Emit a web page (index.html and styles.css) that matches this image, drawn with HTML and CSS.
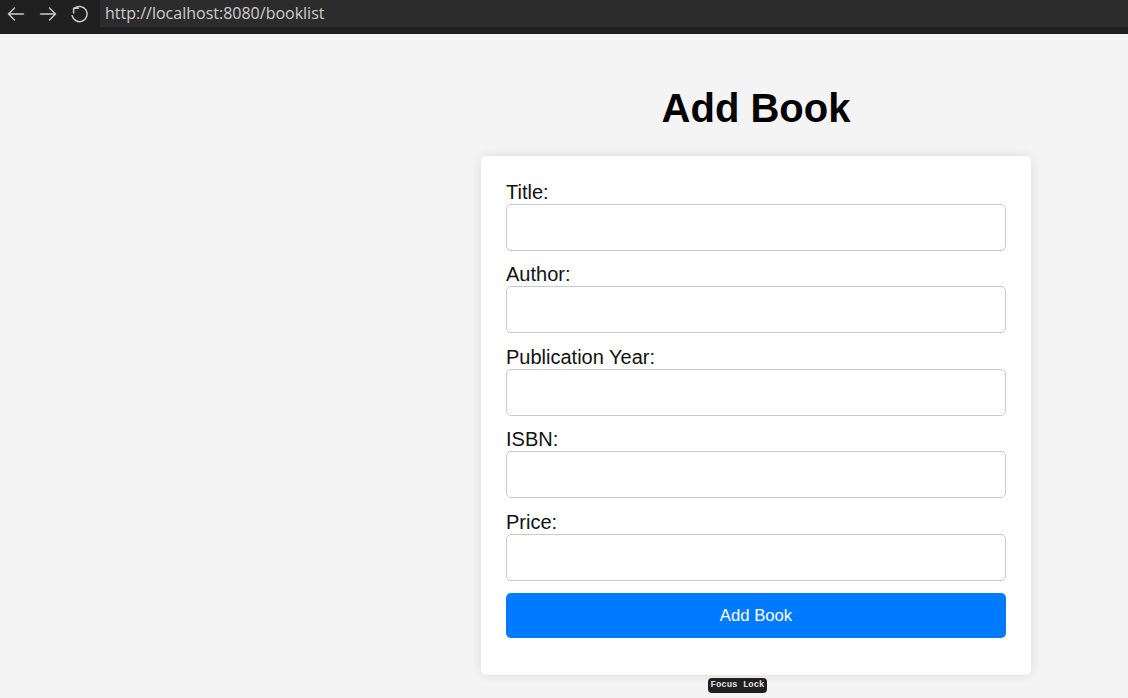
FILE: index.html
```html
<!DOCTYPE html>
<html lang="en">
<head>
<meta charset="utf-8">
<title>Add Book</title>
<link rel="stylesheet" href="styles.css">
</head>
<body>
<header class="browser-bar">
  <nav class="nav-buttons">
    <span class="nav-icon">
      <svg width="18" height="16" viewBox="0 0 18 16" fill="none" stroke="#c9c9c9" stroke-width="1.4" stroke-linecap="round" stroke-linejoin="round"><path d="M16.5 8H1.5M7.5 2L1.5 8l6 6"/></svg>
    </span>
    <span class="nav-icon">
      <svg width="18" height="16" viewBox="0 0 18 16" fill="none" stroke="#c9c9c9" stroke-width="1.4" stroke-linecap="round" stroke-linejoin="round"><path d="M1.5 8h15M10.5 2l6 6-6 6"/></svg>
    </span>
    <span class="nav-icon reload">
      <svg width="18" height="20" viewBox="0 0 18 20" fill="none" stroke="#c9c9c9" stroke-width="1.5" stroke-linecap="round" stroke-linejoin="round"><path d="M3.4 4.4A7.6 7.6 0 1 1 1.1 11.7"/><path d="M7.4 4.2H2.6V9"/></svg>
    </span>
  </nav>
  <div class="url-box">http://localhost:8080/booklist</div>
</header>

<main class="page">
  <section class="content">
    <h1 class="title">Add Book</h1>
    <form class="card">
      <label class="field-label" for="title">Title:</label>
      <input class="field-input" id="title" type="text">
      <label class="field-label" for="author">Author:</label>
      <input class="field-input" id="author" type="text">
      <label class="field-label" for="year">Publication Year:</label>
      <input class="field-input" id="year" type="text">
      <label class="field-label" for="isbn">ISBN:</label>
      <input class="field-input" id="isbn" type="text">
      <label class="field-label" for="price">Price:</label>
      <input class="field-input" id="price" type="text">
      <button class="submit-btn" type="button">Add Book</button>
    </form>
  </section>
</main>

<div class="focus-badge">Focus Lock</div>
</body>
</html>
```

FILE: styles.css
```css
* { box-sizing: border-box; }

html, body {
  margin: 0;
  padding: 0;
  height: 100%;
  background: #f4f4f4;
  font-family: "Liberation Sans", Arial, sans-serif;
  overflow: hidden;
}

.browser-bar {
  height: 34px;
  background: #202020;
  display: flex;
  align-items: flex-start;
}

.nav-buttons {
  width: 100px;
  height: 27px;
  display: flex;
  align-items: center;
  padding-left: 7px;
  gap: 14px;
}

.nav-icon {
  display: flex;
  align-items: center;
  justify-content: center;
  width: 18px;
  height: 22px;
}

.nav-icon svg { overflow: visible; }

.url-box {
  flex: 1;
  height: 27px;
  background: #2c2c2c;
  color: #cdcdcd;
  font-family: "Open Sans", "Noto Sans", sans-serif;
  font-size: 16px;
  line-height: 27px;
  padding-left: 5px;
}

.page {
  padding-left: 384px;
}

.content {
  width: 744px;
  display: flex;
  flex-direction: column;
  align-items: center;
}

.title {
  margin: 50.5px 0 25.5px;
  font-size: 40px;
  line-height: 46px;
  font-weight: bold;
  color: #000;
}

.card {
  width: 550px;
  background: #fff;
  border-radius: 5px;
  box-shadow: 0 0 12px rgba(0, 0, 0, 0.1);
  padding: 25px 25px 25px;
  display: flex;
  flex-direction: column;
}

.field-label {
  font-size: 20px;
  line-height: 23px;
  color: #111;
}

.field-input {
  height: 46.7px;
  border: 1.25px solid #cacaca;
  border-radius: 5px;
  margin: 0 0 12.8px;
  background: #fff;
  padding: 12.5px;
  font-size: 16.7px;
}

.submit-btn {
  height: 44.2px;
  margin-bottom: 12.5px;
  border: none;
  border-radius: 5px;
  background: #007bff;
  color: #fff;
  font-family: "Liberation Sans", Arial, sans-serif;
  font-size: 16.7px;
}

.focus-badge {
  position: absolute;
  left: 708px;
  top: 678px;
  width: 59px;
  height: 15px;
  background: #1f1f1f;
  border-radius: 4px;
  color: #e2e2e2;
  font-family: "Liberation Mono", "Courier New", monospace;
  font-weight: bold;
  font-size: 9px;
  line-height: 15px;
  text-align: center;
}
```
